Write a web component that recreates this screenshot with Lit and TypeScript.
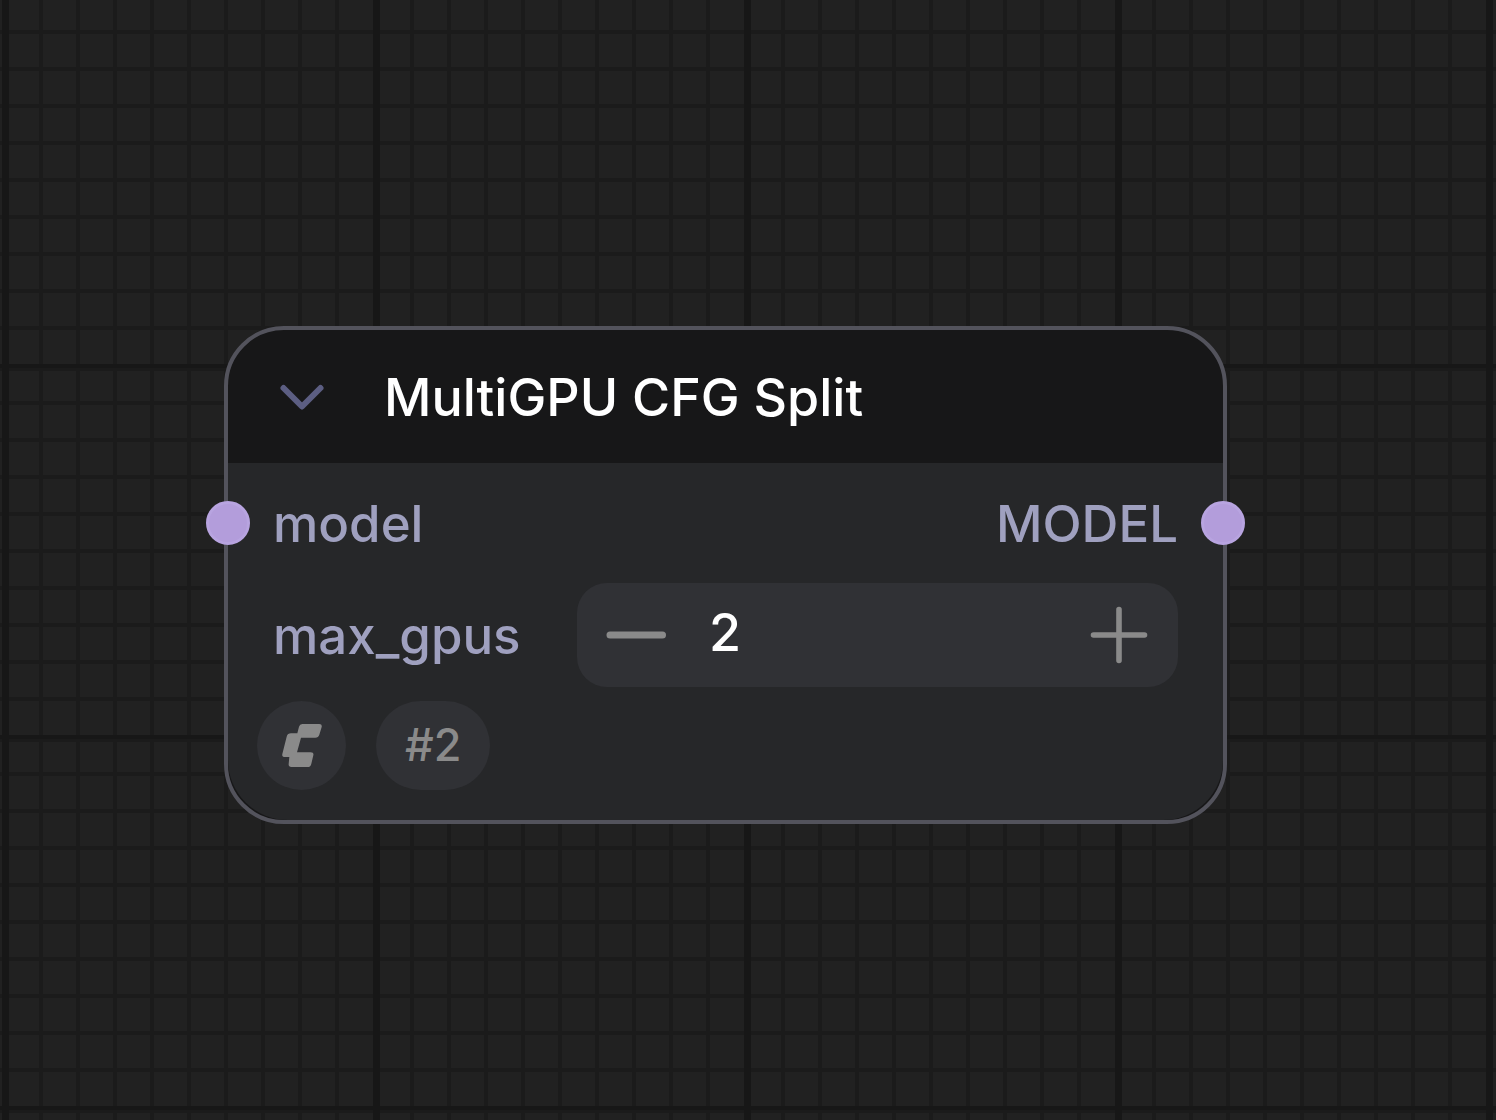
import { LitElement, html, css, svg } from "lit";
import { customElement, property, state } from "lit/decorators.js";

const MAJOR = 371;
const MINOR = 37;
const MINOR_STEPS = [1, 2, 3, 4, 5, 6, 7, 8, 9].map((n) => n * MINOR);

@customElement("canvas-grid")
class CanvasGrid extends LitElement {
  static styles = css`
    :host {
      display: block;
    }
    .grid {
      display: block;
      width: 100%;
      height: 100%;
    }
    .minor {
      fill: #1b1b1b;
    }
    .major {
      fill: #171717;
    }
  `;

  render() {
    return html`
      <svg class="grid" aria-hidden="true" shape-rendering="crispEdges">
        <defs>
          <pattern
            id="cells"
            x="2"
            y="-7"
            width=${MAJOR}
            height=${MAJOR}
            patternUnits="userSpaceOnUse"
          >
            ${MINOR_STEPS.map(
              (p) => svg`
                <rect class="minor" x=${p} y="0" width="4" height=${MAJOR}></rect>
                <rect class="minor" x="0" y=${p} width=${MAJOR} height="4"></rect>
              `,
            )}
            <rect class="minor" x="0" y="0" width=${MAJOR} height="7"></rect>
            <rect class="major" x="0" y="0" width=${MAJOR} height="4"></rect>
            <rect class="major" x="0" y="0" width="7" height=${MAJOR}></rect>
          </pattern>
        </defs>
        <rect width="100%" height="100%" fill="url(#cells)"></rect>
      </svg>
    `;
  }
}

@customElement("graph-node")
class GraphNode extends LitElement {
  @property() heading = "";
  @property() nodeId = "";
  @state() private value = 2;
  @state() private collapsed = false;

  static styles = css`
    :host {
      display: block;
      font-family: Inter, "Liberation Sans", sans-serif;
      font-size: 52px;
      font-weight: 450;
      line-height: 64px;
    }
    .node {
      box-sizing: border-box;
      border: 4px solid #53535c;
      border-radius: 60px;
      background: #171718;
    }
    .header {
      display: flex;
      align-items: center;
      gap: 48px;
      height: 133px;
      padding: 0 40px;
    }
    .title {
      margin: 0;
      padding-top: 2px;
      font-size: 52px;
      font-weight: 450;
      color: #ffffff;
      white-space: nowrap;
    }
    button {
      display: grid;
      place-items: center;
      flex: none;
      padding: 0;
      border: 0;
      background: none;
      cursor: pointer;
    }
    .toggle {
      width: 68px;
      height: 68px;
      color: #5c5e82;
    }
    .body {
      display: flex;
      flex-direction: column;
      border-radius: 0 0 60px 60px;
      background: #262729;
      color: #9fa0bf;
      padding: 16px 0 30px;
    }
    .slots {
      display: flex;
      align-items: center;
      justify-content: space-between;
      height: 88px;
    }
    .slot {
      display: flex;
      align-items: center;
      gap: 23px;
      margin: 0 -22px;
    }
    .label {
      padding-top: 2px;
      font-size: 51px;
    }
    .port {
      box-sizing: border-box;
      width: 44px;
      height: 44px;
      border: 3px solid #b8a4e0;
      border-radius: 50%;
      background: #b39ddb;
    }
    .widget {
      display: grid;
      grid-template-columns: 304px minmax(0, 1fr);
      align-items: center;
      padding: 16px 45px 14px;
    }
    .stepper {
      display: flex;
      align-items: center;
      height: 104px;
      border-radius: 30px;
      background: #303135;
      color: #8a8a8a;
    }
    .step {
      width: 118px;
      height: 104px;
      color: inherit;
    }
    .value {
      flex: 1;
      min-width: 0;
      height: 64px;
      margin: 0 0 4px;
      padding: 0 0 0 14px;
      border: 0;
      outline: none;
      background: none;
      color: #ffffff;
      font: inherit;
    }
    .badges {
      display: flex;
      gap: 30px;
      padding: 0 29px;
    }
    .badge {
      display: grid;
      place-items: center;
      box-sizing: border-box;
      min-width: 89px;
      height: 89px;
      border-radius: 45px;
      background: #303135;
      color: #8a8a8a;
      font-size: 45px;
      line-height: 54px;
    }
    .badge-id {
      padding: 0 29px 2px;
    }
    svg {
      display: block;
    }
  `;

  private stepBy(delta: number) {
    this.value = Math.max(0, this.value + delta);
  }

  private onInput(event: Event) {
    const next = Number((event.target as HTMLInputElement).value);
    if (Number.isFinite(next)) this.value = next;
  }

  private renderBody() {
    return html`
      <div class="body">
        <div class="slots">
          <div class="slot"><span class="port"></span><span class="label">model</span></div>
          <div class="slot"><span class="label">MODEL</span><span class="port"></span></div>
        </div>
        <div class="widget">
          <label class="label" for="max-gpus">max_gpus</label>
          <div class="stepper">
            <button class="step" aria-label="Decrease" @click=${() => this.stepBy(-1)}>
              <svg width="60" height="60" viewBox="0 0 60 60" fill="none" stroke="currentColor" stroke-width="7" stroke-linecap="round">
                <path d="M4 30H56.500" />
              </svg>
            </button>
            <input
              id="max-gpus"
              class="value"
              inputmode="numeric"
              .value=${String(this.value)}
              @change=${this.onInput}
            />
            <button class="step" aria-label="Increase" @click=${() => this.stepBy(1)}>
              <svg width="60" height="60" viewBox="0 0 60 60" fill="none" stroke="currentColor" stroke-width="5.600" stroke-linecap="round">
                <path d="M4.500 30H55.500M30 4.500V55.500" />
              </svg>
            </button>
          </div>
        </div>
        <div class="badges">
          <span class="badge">
            <svg width="40" height="43" viewBox="0 0 120 129" fill="currentColor">
              <path
                d="M61 0H112Q121 0 119 9L112 32Q109 41 100 41H57L45 85H86Q96 85 94 94L88 119Q86 129 77 129H28Q19 129 20 120L22 99H9Q-1 99 1 90L14 38Q17 28 27 28H46L51 8Q53 0 61 0Z"
              />
            </svg>
          </span>
          <span class="badge badge-id">${this.nodeId}</span>
        </div>
      </div>
    `;
  }

  render() {
    return html`
      <article class="node">
        <header class="header">
          <button
            class="toggle"
            aria-label="Collapse node"
            aria-expanded=${this.collapsed ? "false" : "true"}
            @click=${() => (this.collapsed = !this.collapsed)}
          >
            <svg width="48" height="48" viewBox="0 0 48 48" fill="none" stroke="currentColor" stroke-width="6" stroke-linecap="round" stroke-linejoin="round">
              <path d="M5.500 15L24 33.500L42.500 15" />
            </svg>
          </button>
          <h1 class="title">${this.heading}</h1>
        </header>
        ${this.collapsed ? "" : this.renderBody()}
      </article>
    `;
  }
}

@customElement("app-root")
class AppRoot extends LitElement {
  static styles = css`
    :host {
      display: block;
    }
    .canvas {
      position: relative;
      min-height: 100vh;
      overflow: hidden;
      background: #212121;
    }
    .backdrop {
      position: absolute;
      inset: 0;
    }
    .placed {
      position: absolute;
      top: 326px;
      left: 224px;
      right: 269px;
    }
  `;

  render() {
    return html`
      <main class="canvas">
        <canvas-grid class="backdrop"></canvas-grid>
        <graph-node class="placed" heading="MultiGPU CFG Split" nodeId="#2"></graph-node>
      </main>
    `;
  }
}
